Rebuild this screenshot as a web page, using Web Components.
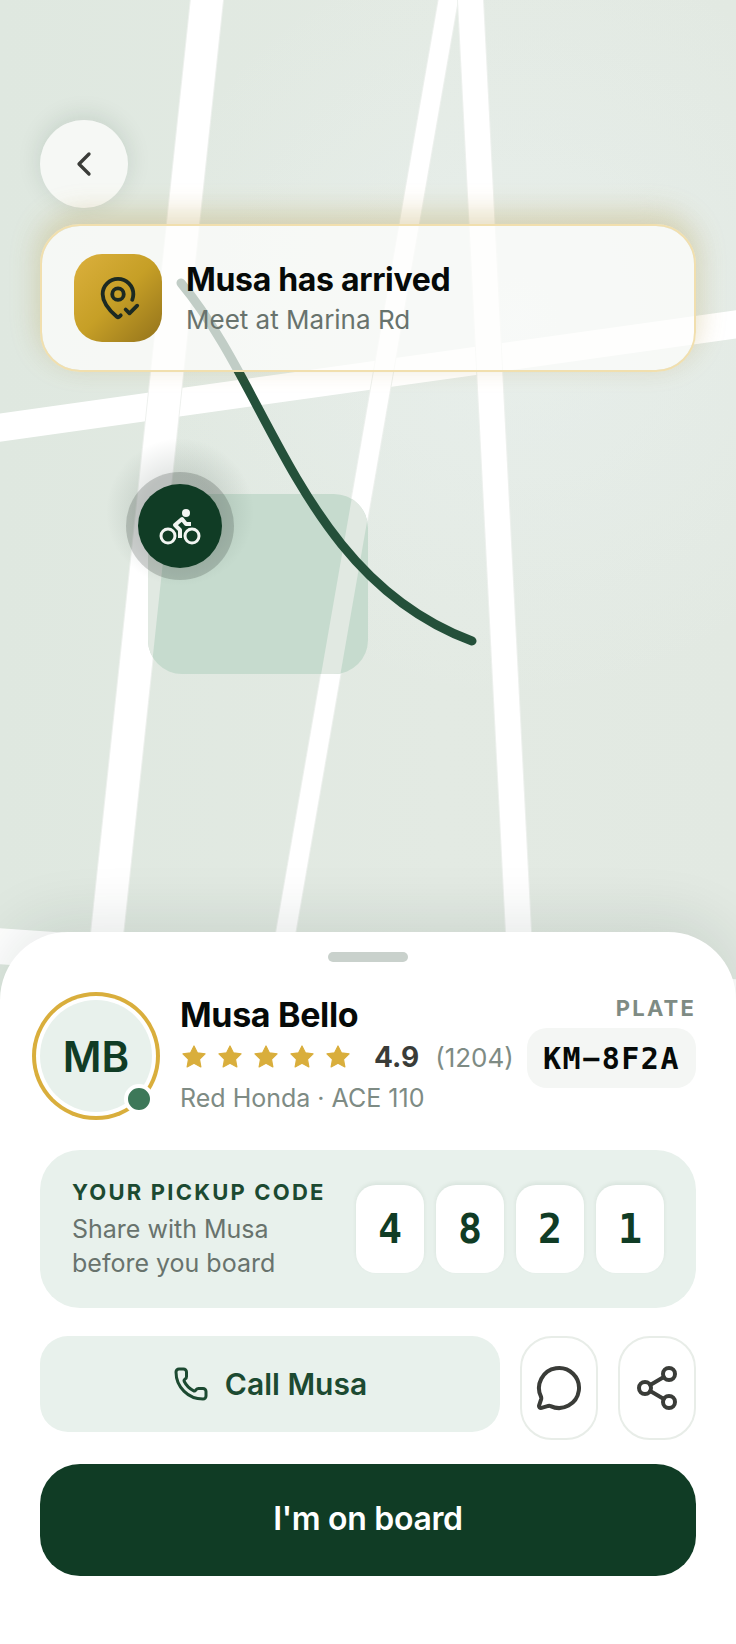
<!DOCTYPE html>
<html lang="en">
<head>
<meta charset="utf-8">
<meta name="viewport" content="width=device-width, initial-scale=1">
<title>Your ride</title>
<style>
  body { margin: 0; background: #fff; font-family: Inter, "Open Sans", sans-serif; color: #060a08; }
</style>
</head>
<body>
<ride-screen></ride-screen>

<template id="ride-screen">
  <style>
    :host { display: flex; flex-direction: column; min-height: 100vh; }
    ride-map { flex: 1; }
  </style>
  <ride-map>
    <round-button label="Back"></round-button>
    <arrival-banner>
      <span slot="title">Musa has arrived</span>
      <span slot="text">Meet at Marina Rd</span>
    </arrival-banner>
  </ride-map>
  <bottom-sheet>
    <driver-card initials="MB" rating="4.9" count="(1204)" plate="KM−8F2A">
      <span slot="name">Musa Bello</span>
      <span slot="vehicle">Red Honda · ACE 110</span>
    </driver-card>
    <pickup-code code="4821">
      <span slot="title">YOUR PICKUP CODE</span>
      <span slot="text">Share with Musa<br>before you board</span>
    </pickup-code>
    <contact-row>Call Musa</contact-row>
    <primary-button>I'm on board</primary-button>
  </bottom-sheet>
</template>

<template id="ride-map">
  <style>
    :host { display: block; position: relative; min-height: 700px; background: #e2e9e2; }
    .canvas { position: absolute; inset: 0 0 -68px; background:
      radial-gradient(circle at 70% 32%, rgba(236,243,243,.5), rgba(236,243,243,0) 45%),
      linear-gradient(90deg, #dfe8e0, #e3eae3 60%, #e2e9e2); }
    svg { display: block; width: 100%; height: 100%; }
    .overlay { position: relative; display: flex; flex-direction: column; gap: 16px; padding: 120px 40px 0; }
  </style>
  <div class="canvas">
    <svg viewBox="0 0 736 1000" preserveAspectRatio="xMidYMin slice" aria-hidden="true">
      <defs>
        <radialGradient id="halo">
          <stop offset=".5" stop-color="#1c3227" stop-opacity=".12"/>
          <stop offset="1" stop-color="#1c3227" stop-opacity="0"/>
        </radialGradient>
        <clipPath id="park"><rect x="148" y="494" width="220" height="180" rx="34"/></clipPath>
      </defs>
      <g stroke="#fff" fill="none">
        <path stroke-width="28" d="M-10 429 746 323"/>
        <path stroke-width="36" d="M-10 945.500 746 998"/>
        <path stroke="#eef1ee" stroke-width="34" d="M208 -10 100 1000"/>
        <path stroke-width="32" d="M208 -10 100 1000"/>
        <path stroke="#eef1ee" stroke-width="21" d="M450 -10 274 1000"/>
        <path stroke-width="19" d="M450 -10 274 1000"/>
        <path stroke="#eef1ee" stroke-width="27" d="M470 -10 522 1000"/>
        <path stroke-width="25" d="M470 -10 522 1000"/>
      </g>
      <g clip-path="url(#park)" stroke="#e1e9e2" fill="none">
        <path d="M148 494h220v180H148z" fill="#c6dbce" stroke="none"/>
        <path stroke-width="32" d="M208 -10 100 1000"/>
        <path stroke-width="19" d="M450 -10 274 1000"/>
      </g>
      <path d="M181 283C272 392 303 578 472 641" fill="none" stroke="#24503a" stroke-width="9" stroke-linecap="round"/>
      <circle cx="180" cy="512" r="74" fill="url(#halo)"/>
      <circle cx="180" cy="526" r="54" fill="#1c2a23" fill-opacity=".2"/>
      <circle cx="180" cy="526" r="42" fill="#103c25"/>
      <g transform="translate(160 506)" fill="none" stroke="#f2f5f2" stroke-width="3" stroke-linejoin="round">
        <circle cx="8" cy="30" r="7"/>
        <circle cx="32" cy="30" r="7"/>
        <circle cx="26" cy="7" r="4" fill="#f2f5f2" stroke="none"/>
        <path stroke-width="4" d="M20 32v-8l-5-5 7-6 4 5h5"/>
      </g>
    </svg>
  </div>
  <div class="overlay"><slot></slot></div>
</template>

<template id="round-button">
  <style>
    :host { display: block; }
    button { display: grid; place-items: center; width: 88px; height: 88px; padding: 0; border: 0; border-radius: 50%;
      background: rgba(248,250,247,.9); box-shadow: 0 -4px 24px rgba(20,50,35,.12); color: #3a3c38; cursor: pointer; }
  </style>
  <button><svg width="40" height="40" viewBox="0 0 24 24" fill="none" stroke="currentColor" stroke-width="2" stroke-linecap="round" stroke-linejoin="round"><path d="m15 18-6-6 6-6"/></svg></button>
</template>

<template id="arrival-banner">
  <style>
    :host { display: flex; align-items: center; gap: 24px; padding: 28px 32px; border: 2px solid #f1dfae; border-radius: 40px;
      background: rgba(254,254,252,.72); background-clip: padding-box;
      box-shadow: 0 -10px 30px rgba(204,166,60,.28), 0 -8px 30px rgba(20,50,35,.06); }
    .tile { display: grid; place-items: center; width: 88px; height: 88px; border-radius: 28px; color: #1c2a22;
      background: linear-gradient(135deg, #dbb03d, #c69f26 50%, #93731b); }
    .text { padding-top: 4px; }
    h1, p { margin: 0; }
    h1 { font-size: 32px; line-height: 40px; font-weight: 700; letter-spacing: -0.01em; }
    p { font-size: 26px; line-height: 40px; color: #68736d; }
  </style>
  <div class="tile"><svg width="46" height="46" viewBox="0 0 24 24" fill="none" stroke="currentColor" stroke-width="2" stroke-linecap="round" stroke-linejoin="round"><path d="M19.430 12.935c.357-.967.570-1.955.570-2.935a8 8 0 0 0-16 0c0 4.993 5.539 10.193 7.399 11.799a1 1 0 0 0 1.202 0 32 32 0 0 0 .813-.728"/><circle cx="12" cy="10" r="3"/><path d="m16 18 2 2 4-4"/></svg></div>
  <div class="text"><h1><slot name="title"></slot></h1><p><slot name="text"></slot></p></div>
</template>

<template id="bottom-sheet">
  <style>
    :host { display: flex; flex-direction: column; position: relative; padding: 20px 40px 68px; border-radius: 68px 68px 0 0;
      background: #fff; box-shadow: 0 -12px 60px rgba(20,50,35,.11); }
    .handle { align-self: center; width: 80px; height: 10px; border-radius: 5px; background: #c9d1cc; }
    .content { display: flex; flex-direction: column; padding-top: 32px; }
  </style>
  <div class="handle"></div>
  <div class="content"><slot></slot></div>
</template>

<template id="driver-card">
  <style>
    :host { display: flex; align-items: center; gap: 28px; margin-bottom: 32px; }
    .avatar { position: relative; display: grid; place-items: center; flex: none; width: 112px; height: 112px; border-radius: 50%;
      background: #e8f1ec; box-shadow: 0 0 0 4px #fff, 0 0 0 8px #d9ae3c; color: #103c25; font-size: 42px; font-weight: 600; }
    .dot { position: absolute; right: -2px; bottom: -2px; width: 22px; height: 22px; border: 4px solid #fff; border-radius: 50%; background: #3d7859; }
    .info { flex: 1; min-width: 0; white-space: nowrap; }
    h2, p { margin: 0; }
    h2 { font-size: 34px; line-height: 42px; font-weight: 700; letter-spacing: -0.01em; }
    .rating { display: flex; align-items: center; height: 42px; font-size: 26px; color: #7e8b84; }
    .stars { display: flex; gap: 8px; margin-right: 22px; color: #d9ae3c; }
    b { margin-right: 16px; font-size: 28px; font-weight: 700; color: #3a3c38; }
    p { font-size: 25px; line-height: 40px; color: #7e8b84; }
    .side { display: flex; flex-direction: column; align-items: flex-end; gap: 6px; margin-bottom: 30px; margin-left: -28px; }
    .label { font-size: 22px; line-height: 28px; font-weight: 700; letter-spacing: 0.1em; color: #7e8b84; }
    .plate { display: grid; place-items: center; height: 60px; padding: 0 16px; border-radius: 20px; background: #f4f6f4;
      font: 700 30px "DejaVu Sans Mono", monospace; letter-spacing: 0.05em; }
  </style>
  <div class="avatar"><span id="initials"></span><span class="dot"></span></div>
  <div class="info">
    <h2><slot name="name"></slot></h2>
    <div class="rating"><span class="stars"></span><b></b><span id="count"></span></div>
    <p><slot name="vehicle"></slot></p>
  </div>
  <div class="side"><span class="label">PLATE</span><span class="plate"></span></div>
</template>

<template id="pickup-code">
  <style>
    :host { display: flex; justify-content: space-between; align-items: center; margin-bottom: 28px; padding: 28px 32px; border-radius: 40px; background: #e8f1ec; }
    h3, p { margin: 0; }
    h3 { margin-bottom: 6px; font-size: 22px; line-height: 28px; font-weight: 700; letter-spacing: 0.1em; color: #1c4a31; }
    p { font-size: 25px; line-height: 34px; color: #68736d; }
    .digits { display: flex; gap: 12px; }
    .digits span { display: grid; place-items: center; width: 68px; height: 88px; border-radius: 20px; background: #fff;
      box-shadow: 0 -2px 4px rgba(20,50,35,.07); color: #103c25; font: 700 40px "DejaVu Sans Mono", monospace; }
  </style>
  <div><h3><slot name="title"></slot></h3><p><slot name="text"></slot></p></div>
  <div class="digits"></div>
</template>

<template id="contact-row">
  <style>
    :host { display: flex; align-items: flex-start; gap: 20px; margin-bottom: 24px; }
    button { display: flex; align-items: center; justify-content: center; box-sizing: border-box; padding: 0; font: inherit; cursor: pointer; }
    .call { flex: 1; height: 96px; gap: 16px; border: 0; border-radius: 28px; background: #e8f1ec; color: #1c4a31; font-size: 30px; font-weight: 600; }
    .icon { width: 78px; height: 104px; border: 2px solid #e8ede8; border-radius: 32px; background: #fff; color: #3a3c38; }
    svg { fill: none; stroke: currentColor; stroke-width: 2; stroke-linecap: round; stroke-linejoin: round; }
  </style>
  <button class="call"><svg width="36" height="36" viewBox="0 0 24 24"><path d="M13.832 16.568a1 1 0 0 0 1.213-.303l.355-.465A2 2 0 0 1 17 15h3a2 2 0 0 1 2 2v3a2 2 0 0 1-2 2A18 18 0 0 1 2 4a2 2 0 0 1 2-2h3a2 2 0 0 1 2 2v3a2 2 0 0 1-.8 1.600l-.468.351a1 1 0 0 0-.292 1.233 14 14 0 0 0 6.392 6.384"/></svg><span><slot></slot></span></button>
  <button class="icon" aria-label="Message"><svg width="48" height="48" viewBox="0 0 24 24"><path d="M2.992 16.342a2 2 0 0 1 .094 1.167l-1.065 3.290a1 1 0 0 0 1.236 1.168l3.413-.998a2 2 0 0 1 1.099.092 10 10 0 1 0-4.777-4.719"/></svg></button>
  <button class="icon" aria-label="Share"><svg width="48" height="48" viewBox="0 0 24 24"><circle cx="18" cy="5" r="3"/><circle cx="6" cy="12" r="3"/><circle cx="18" cy="19" r="3"/><path d="m8.590 13.510 6.830 3.980M15.410 6.510l-6.820 3.980"/></svg></button>
</template>

<template id="primary-button">
  <style>
    :host { display: block; }
    button { display: block; width: 100%; height: 112px; padding: 0 0 4px; border: 0; border-radius: 40px; background: #103c25; color: #fff;
      font: inherit; font-size: 32px; font-weight: 600; letter-spacing: -0.01em; cursor: pointer; }
  </style>
  <button><slot></slot></button>
</template>

<script>
  class TemplateElement extends HTMLElement {
    constructor() {
      super();
      const template = document.getElementById(this.localName);
      this.attachShadow({ mode: "open" }).append(template.content.cloneNode(true));
    }
    find(selector) { return this.shadowRoot.querySelector(selector); }
  }

  class RideScreen extends TemplateElement {}
  class RideMap extends TemplateElement {}
  class ArrivalBanner extends TemplateElement {}
  class BottomSheet extends TemplateElement {}
  class ContactRow extends TemplateElement {}
  class PrimaryButton extends TemplateElement {}

  class RoundButton extends TemplateElement {
    connectedCallback() { this.find("button").setAttribute("aria-label", this.getAttribute("label")); }
  }

  class DriverCard extends TemplateElement {
    connectedCallback() {
      const star = '<svg width="28" height="28" viewBox="0 0 24 24" fill="currentColor" stroke="currentColor" stroke-linejoin="round" aria-hidden="true"><path d="m12 2.500 2.900 5.900 6.600.900-4.800 4.600 1.200 6.600-5.900-3.100-5.900 3.100 1.200-6.600-4.800-4.600 6.600-.900z"/></svg>';
      this.find(".stars").innerHTML = star.repeat(5);
      this.find("#initials").textContent = this.getAttribute("initials");
      this.find("b").textContent = this.getAttribute("rating");
      this.find("#count").textContent = this.getAttribute("count");
      this.find(".plate").textContent = this.getAttribute("plate");
    }
  }

  class PickupCode extends TemplateElement {
    connectedCallback() {
      this.find(".digits").replaceChildren(...[...this.getAttribute("code")].map((digit) => {
        const box = document.createElement("span");
        box.textContent = digit;
        return box;
      }));
    }
  }

  customElements.define("ride-map", RideMap);
  customElements.define("round-button", RoundButton);
  customElements.define("arrival-banner", ArrivalBanner);
  customElements.define("bottom-sheet", BottomSheet);
  customElements.define("driver-card", DriverCard);
  customElements.define("pickup-code", PickupCode);
  customElements.define("contact-row", ContactRow);
  customElements.define("primary-button", PrimaryButton);
  customElements.define("ride-screen", RideScreen);
</script>
</body>
</html>
